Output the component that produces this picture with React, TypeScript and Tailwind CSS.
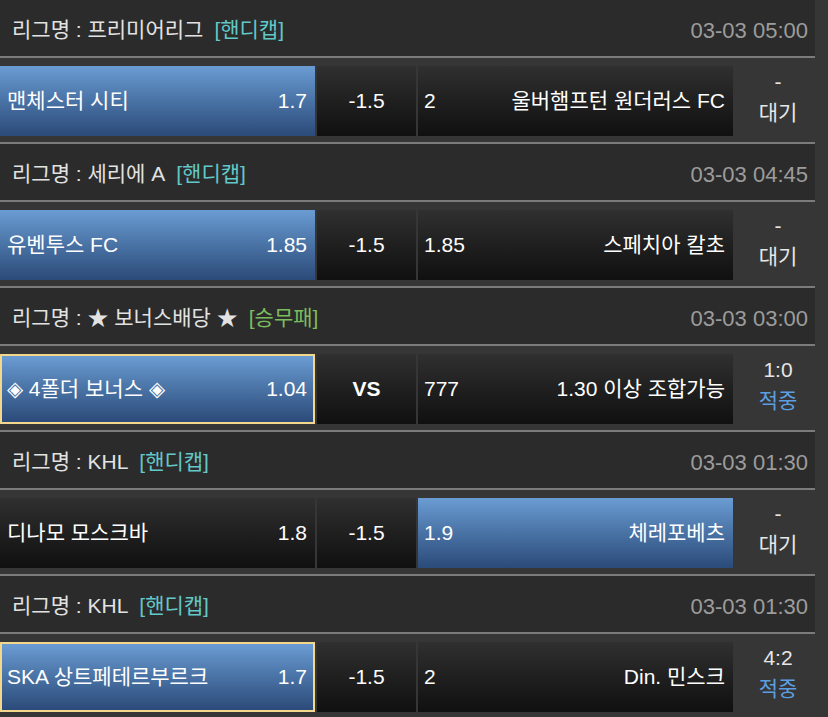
import React from 'react'

type Match = {
  league: string
  tag: string
  tagColor: 'teal' | 'green'
  time: string
  home: string
  homeOdds: string
  mid: string
  awayOdds: string
  away: string
  pick: 'home' | 'away'
  selected?: boolean
  top: string
  status: string
  hit?: boolean
}

const matches: Match[] = [
  { league: '프리미어리그', tag: '[핸디캡]', tagColor: 'teal', time: '03-03 05:00', home: '맨체스터 시티', homeOdds: '1.7', mid: '-1.5', awayOdds: '2', away: '울버햄프턴 원더러스 FC', pick: 'home', top: '-', status: '대기' },
  { league: '세리에 A', tag: '[핸디캡]', tagColor: 'teal', time: '03-03 04:45', home: '유벤투스 FC', homeOdds: '1.85', mid: '-1.5', awayOdds: '1.85', away: '스페치아 칼초', pick: 'home', top: '-', status: '대기' },
  { league: '★ 보너스배당 ★', tag: '[승무패]', tagColor: 'green', time: '03-03 03:00', home: '◈ 4폴더 보너스 ◈', homeOdds: '1.04', mid: 'VS', awayOdds: '777', away: '1.30 이상 조합가능', pick: 'home', selected: true, top: '1:0', status: '적중', hit: true },
  { league: 'KHL', tag: '[핸디캡]', tagColor: 'teal', time: '03-03 01:30', home: '디나모 모스크바', homeOdds: '1.8', mid: '-1.5', awayOdds: '1.9', away: '체레포베츠', pick: 'away', top: '-', status: '대기' },
  { league: 'KHL', tag: '[핸디캡]', tagColor: 'teal', time: '03-03 01:30', home: 'SKA 상트페테르부르크', homeOdds: '1.7', mid: '-1.5', awayOdds: '2', away: 'Din. 민스크', pick: 'home', selected: true, top: '4:2', status: '적중', hit: true },
]

const blue = 'bg-gradient-to-b from-[#6a9cd3] to-[#2b4b79]'
const dark = 'bg-gradient-to-b from-[#303030] to-[#101010]'

function MatchBlock({ m }: { m: Match }) {
  return (
    <div>
      <div className="flex h-[56px] w-[815px] items-center justify-between bg-[#2b2b2b] pl-3 pr-[7px] pt-1 text-[21px]">
        <div className="text-[#e2e2e2]">
          리그명 : {m.league}
          <span className={m.tagColor === 'teal' ? 'ml-[11px] text-[#62c8c8]' : 'ml-[11px] text-[#7cbc5c]'}>{m.tag}</span>
        </div>
        <div className="text-[22px] text-[#9c9c9c]">{m.time}</div>
      </div>
      <div className="h-[2px] w-[815px] bg-[#7b7b7b]" />
      <div className="flex h-[84px] items-start pt-2">
        <div
          className={`flex h-[70px] w-[315px] items-center justify-between text-[21px] text-white ${
            m.pick === 'home' ? blue : dark
          } ${m.selected ? 'border-2 border-[#f3d78b] pl-[5px] pr-[6px]' : 'pl-[7px] pr-[8px]'}`}
        >
          <span>{m.home}</span>
          <span>{m.homeOdds}</span>
        </div>
        <div
          className={`ml-[2px] flex h-[70px] w-[99px] items-center justify-center text-[21px] text-white ${dark} ${
            m.mid === 'VS' ? 'font-bold' : ''
          }`}
        >
          {m.mid}
        </div>
        <div
          className={`ml-[2px] flex h-[70px] w-[315px] items-center justify-between pl-[6px] pr-[8px] text-[21px] text-white ${
            m.pick === 'away' ? blue : dark
          }`}
        >
          <span>{m.awayOdds}</span>
          <span>{m.away}</span>
        </div>
        <div className="flex h-[70px] w-[90px] flex-col items-center justify-center pb-2 text-[21px] leading-[31px]">
          <span className="text-[#e6e6e6]">{m.top}</span>
          <span className={m.hit ? 'text-[#5c9fe0]' : 'text-[#e6e6e6]'}>{m.status}</span>
        </div>
      </div>
      <div className="h-[2px] w-[815px] bg-[#7b7b7b]" />
    </div>
  )
}

export default function App() {
  return (
    <div
      className="h-[717px] w-[828px] overflow-hidden bg-[#363636]"
      style={{ fontFamily: '"Liberation Sans", "Noto Sans CJK KR", sans-serif' }}
    >
      {matches.map((m, i) => (
        <MatchBlock key={i} m={m} />
      ))}
    </div>
  )
}
